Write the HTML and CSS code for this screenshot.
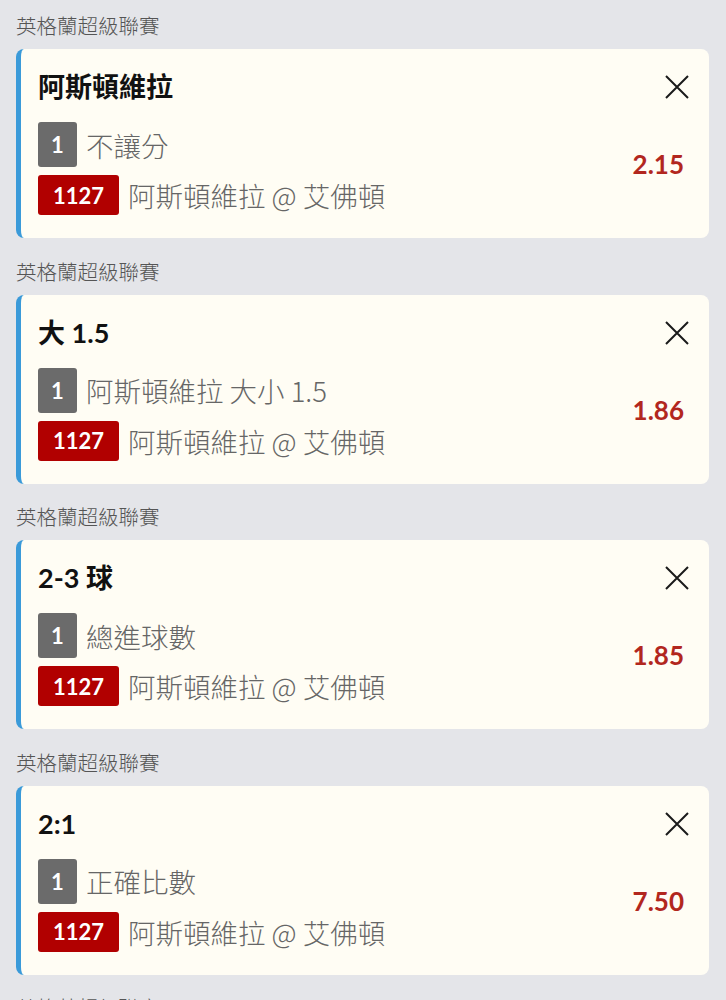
FILE: index.html
```html
<!DOCTYPE html>
<html lang="zh-Hant">
  <head>
    <meta charset="UTF-8" />
    <meta name="viewport" content="width=device-width, initial-scale=1.0" />
    <title>投注單</title>
    <link rel="stylesheet" href="styles.css">
  </head>
  <body>
    <div class="slip">
      <!-- Selection 1 -->
      <div class="group">
        <div class="league">英格蘭超級聯賽</div>
        <div class="card">
          <div class="main">
            <div class="title">阿斯頓維拉</div>
            <div class="line"><span class="tag gray">1</span><span class="desc">不讓分</span></div>
            <div class="line"><span class="tag red">1127</span><span class="desc">阿斯頓維拉 @ 艾佛頓</span></div>
          </div>
          <div class="side">
            <span class="close">
              <svg width="24" height="24" viewBox="0 0 24 24"><path d="M1 1L23 23M23 1L1 23" /></svg>
            </span>
            <div class="odds">2.15</div>
          </div>
        </div>
      </div>

      <!-- Selection 2 -->
      <div class="group">
        <div class="league">英格蘭超級聯賽</div>
        <div class="card">
          <div class="main">
            <div class="title">大 1.5</div>
            <div class="line"><span class="tag gray">1</span><span class="desc">阿斯頓維拉 大小 1.5</span></div>
            <div class="line"><span class="tag red">1127</span><span class="desc">阿斯頓維拉 @ 艾佛頓</span></div>
          </div>
          <div class="side">
            <span class="close">
              <svg width="24" height="24" viewBox="0 0 24 24"><path d="M1 1L23 23M23 1L1 23" /></svg>
            </span>
            <div class="odds">1.86</div>
          </div>
        </div>
      </div>

      <!-- Selection 3 -->
      <div class="group">
        <div class="league">英格蘭超級聯賽</div>
        <div class="card">
          <div class="main">
            <div class="title">2-3 球</div>
            <div class="line"><span class="tag gray">1</span><span class="desc">總進球數</span></div>
            <div class="line"><span class="tag red">1127</span><span class="desc">阿斯頓維拉 @ 艾佛頓</span></div>
          </div>
          <div class="side">
            <span class="close">
              <svg width="24" height="24" viewBox="0 0 24 24"><path d="M1 1L23 23M23 1L1 23" /></svg>
            </span>
            <div class="odds">1.85</div>
          </div>
        </div>
      </div>

      <!-- Selection 4 -->
      <div class="group">
        <div class="league">英格蘭超級聯賽</div>
        <div class="card">
          <div class="main">
            <div class="title">2:1</div>
            <div class="line"><span class="tag gray">1</span><span class="desc">正確比數</span></div>
            <div class="line"><span class="tag red">1127</span><span class="desc">阿斯頓維拉 @ 艾佛頓</span></div>
          </div>
          <div class="side">
            <span class="close">
              <svg width="24" height="24" viewBox="0 0 24 24"><path d="M1 1L23 23M23 1L1 23" /></svg>
            </span>
            <div class="odds">7.50</div>
          </div>
        </div>
      </div>

      <!-- Selection 5 (cut off by the viewport) -->
      <div class="group">
        <div class="league">英格蘭超級聯賽</div>
      </div>
    </div>
  </body>
</html>
```

FILE: styles.css
```css
/* General Reset */
* {
  margin: 0;
  padding: 0;
  box-sizing: border-box;
}

body {
  font-family: "Lato", "Noto Sans CJK TC", sans-serif;
  background: #e4e5e9;
  color: #222;
}

.slip {
  padding: 0 17px 0 16px;
}

.group {
  padding-top: 21.5px;
}

.group:first-child {
  padding-top: 14px;
}

.league {
  font-size: 20.5px;
  line-height: 24px;
  font-weight: 300;
  color: #555;
  margin-bottom: 11px;
}

/* Card */
.card {
  display: flex;
  background: #fffdf4;
  border-left: 5px solid #3a9ad9;
  border-radius: 8px;
  padding: 20px 20px 23px 17px;
}

.main {
  flex: 1;
}

.title {
  font-size: 27px;
  line-height: 36px;
  font-weight: 700;
  color: #111;
  margin-bottom: 17px;
}

.line {
  display: flex;
  align-items: center;
  gap: 9px;
}

.line + .line {
  margin-top: 8px;
}

.desc {
  font-family: "Noto Sans CJK TC", "Lato", sans-serif;
  font-size: 27.5px;
  font-weight: 300;
  color: #666;
}

.tag {
  display: inline-flex;
  align-items: center;
  justify-content: center;
  color: #fff;
  font-weight: 700;
  font-size: 22px;
  border-radius: 3px;
}

.tag.gray {
  background: #6b6b6b;
  width: 39px;
  height: 45px;
}

.tag.red {
  background: #b10000;
  height: 40px;
  padding: 0 15px;
}

/* Right side */
.side {
  display: flex;
  flex-direction: column;
  align-items: flex-end;
}

.close {
  display: flex;
  align-items: center;
  height: 36px;
  cursor: pointer;
}

.close svg {
  display: block;
  stroke: #1a1a1a;
  stroke-width: 2;
  fill: none;
}

.odds {
  margin-top: 43px;
  margin-right: 5px;
  font-size: 26px;
  line-height: 32px;
  font-weight: 700;
  color: #b2271e;
}
```
